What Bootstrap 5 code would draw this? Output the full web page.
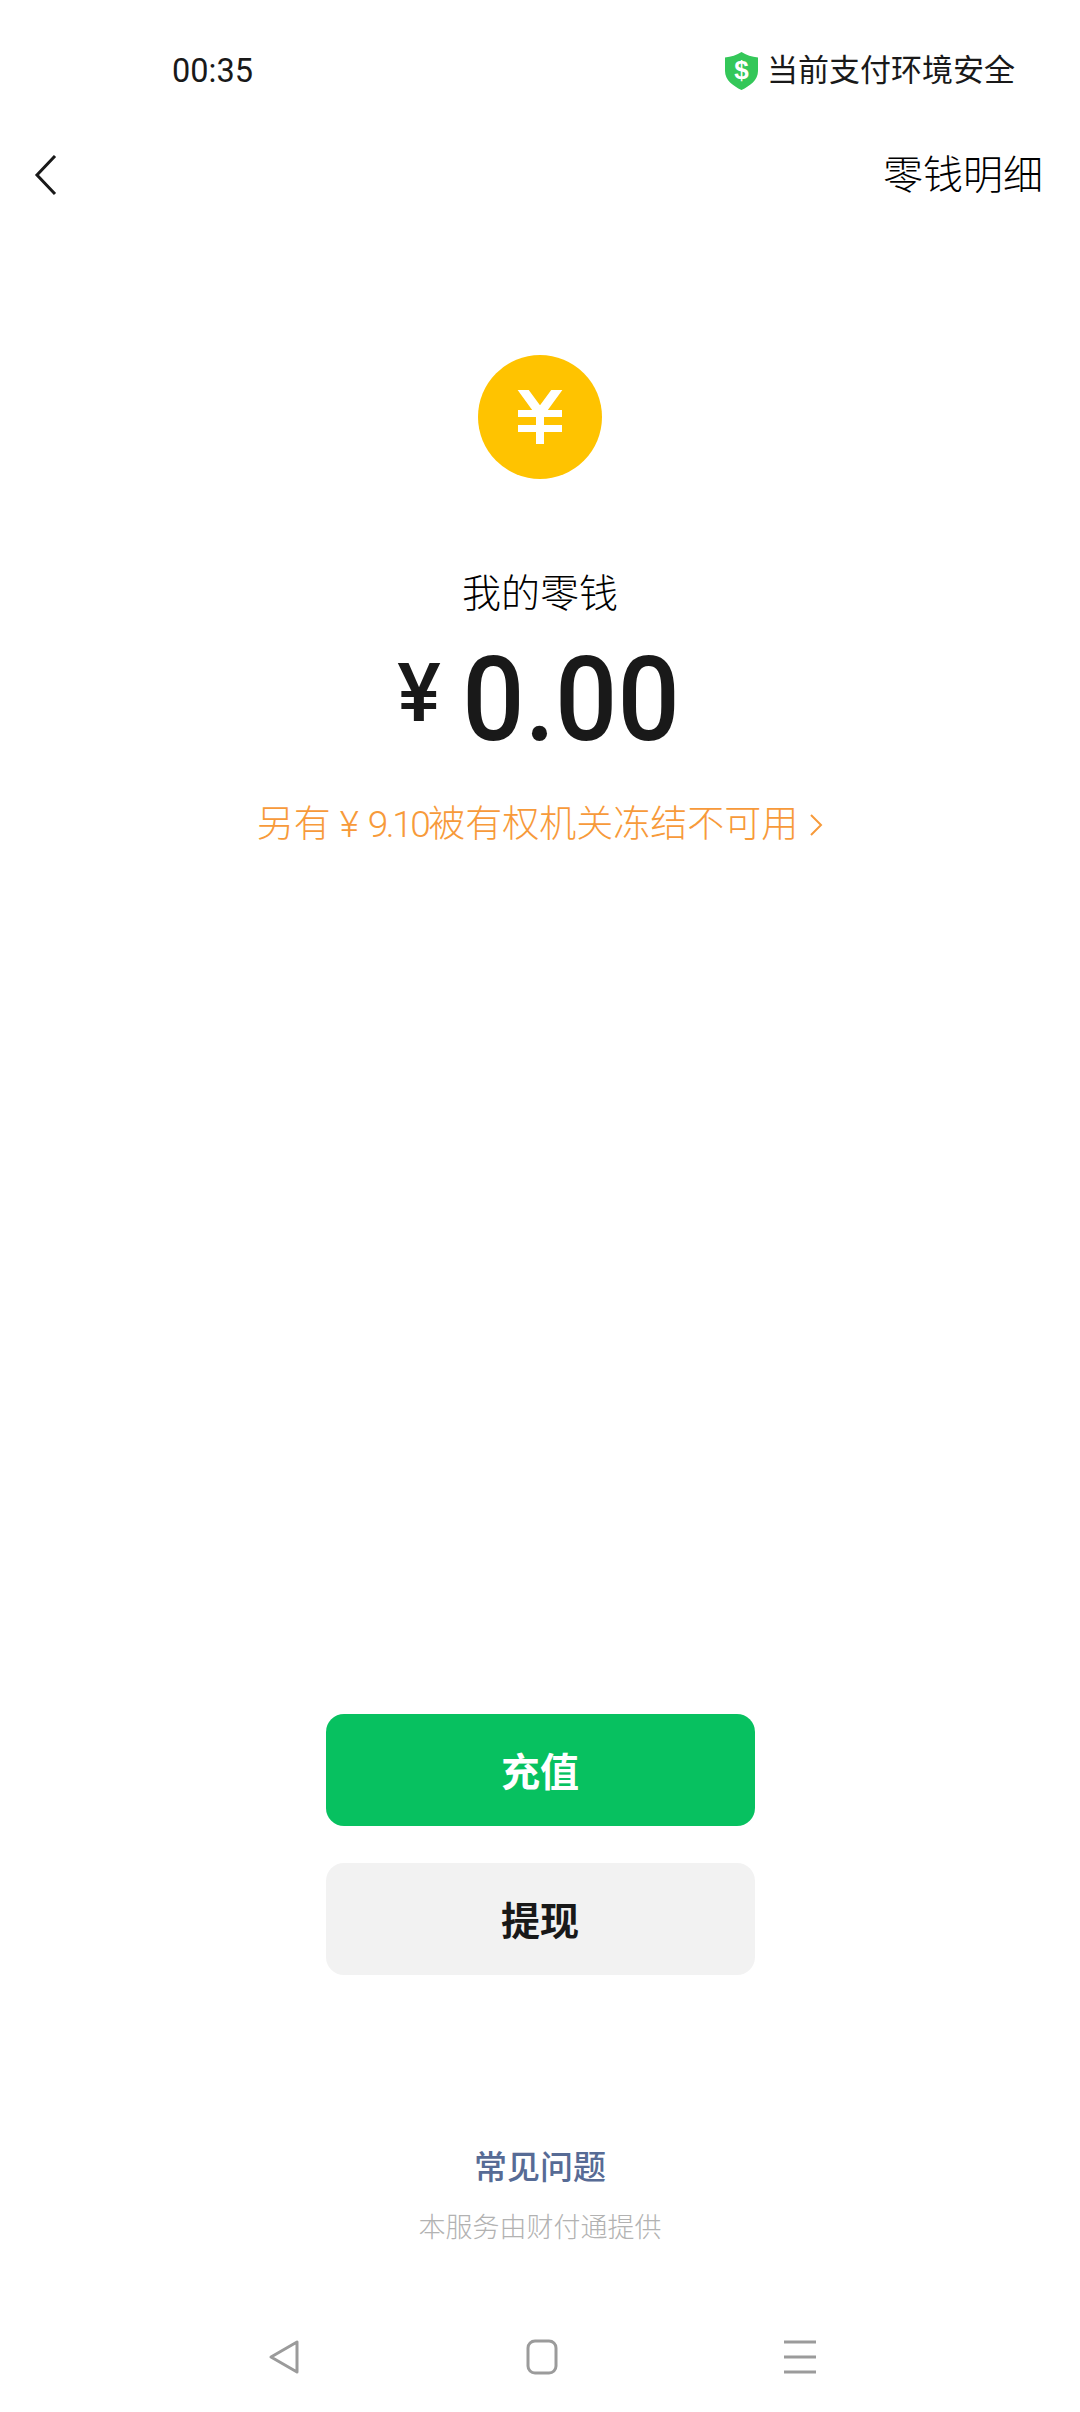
<!DOCTYPE html>
<html lang="zh-CN">

<head>
  <meta charset="UTF-8" />
  <meta name="viewport" content="width=device-width, initial-scale=1.0" />
  <title>我的零钱</title>
  <link href="https://cdn.jsdelivr.net/npm/bootstrap@5.3.2/dist/css/bootstrap.min.css" rel="stylesheet" />
  <style>
    body {
      width: 1080px;
      height: 2412px;
      overflow: hidden;
      background: #fff;
      color: #191919;
      font-family: Roboto, "Noto Sans CJK SC", sans-serif;
    }

    .status-row {
      height: 52px;
      margin-top: 45px;
      padding: 0 65px 0 172px;
      font-size: 32.5px;
      line-height: 52px;
    }

    .status-safe { font-size: 31px; }

    .top-row {
      height: 60px;
      margin-top: 49px;
      padding: 0 37px 0 34px;
    }

    .detail-link { font-size: 40px; line-height: 60px; font-weight: 300; color: #000; }

    .coin {
      width: 124px;
      height: 124px;
      margin-top: 149px;
      background: #ffc300;
      border-radius: 50%;
    }

    .wallet-title { margin-top: 88px; font-size: 39px; line-height: 54px; font-weight: 300; color: #000; }

    .amount { margin-top: 12px; height: 134px; padding-left: 3px; }

    .amount-sign { font-size: 82px; line-height: 134px; font-weight: 500; margin-right: 15px; margin-top: -7px; }

    .amount-num { font-size: 116px; line-height: 134px; font-weight: 500; transform: scaleX(.945); }

    .frozen-link { margin-top: 32px; gap: 11px; font-size: 37px; line-height: 52px; font-weight: 300; color: #f79a3a; text-decoration: none; }

    .frozen-num { letter-spacing: -2.5px; }

    .pay-btn {
      width: 429px;
      height: 112px;
      border: 0;
      border-radius: 18px;
      font-size: 39px;
      font-weight: 700;
      padding: 6px 0 0;
    }

    .pay-green { margin-top: 863px; background: #07c160; color: #fff; }
    .pay-gray { margin-top: 37px; background: #f2f2f2; color: #191919; }

    .faq-link { margin-top: 169px; font-size: 33px; line-height: 48px; font-weight: 500; color: #576b95; text-decoration: none; }
    .provider { margin-top: 16px; font-size: 27px; line-height: 40px; font-weight: 300; color: #b2b2b2; }

    .nav-keys { margin-top: 87px; padding: 0 264px 0 268px; height: 44px; }
  </style>
</head>

<body>
  <div class="d-flex flex-column">
    <!-- status bar -->
    <div class="status-row d-flex justify-content-between align-items-center">
      <span>00:35</span>
      <span class="status-safe d-flex align-items-center gap-2">
        <svg width="35" height="38" viewBox="0 0 35 38">
          <path d="M17.5 0 C22 3 28 5 34 5.5 V19 C34 28 26 34 17.5 38 C9 34 1 28 1 19 V5.5 C7 5 13 3 17.5 0 Z" fill="#34c759" />
          <text x="17.5" y="27" text-anchor="middle" fill="#fff" font-size="26" font-weight="700" font-family="Liberation Sans">$</text>
        </svg>
        当前支付环境安全
      </span>
    </div>

    <!-- title bar -->
    <div class="top-row d-flex justify-content-between align-items-center">
      <svg width="24" height="42" viewBox="0 0 24 42">
        <path d="M21 1 L3 20 L21 39" fill="none" stroke="#191919" stroke-width="3" />
      </svg>
      <a class="detail-link text-decoration-none" href="#">零钱明细</a>
    </div>

    <!-- balance -->
    <div class="d-flex flex-column align-items-center">
      <div class="coin d-flex align-items-center justify-content-center">
        <svg width="46" height="54" viewBox="0 0 46 54">
          <path d="M4 -3 L23 23 L42 -3" fill="none" stroke="#fff" stroke-width="9" />
          <path d="M1 20 H45 V27 H1 Z M1 35 H45 V42 H1 Z M19 22 H27 V54 H19 Z" fill="#fff" />
        </svg>
      </div>
      <div class="wallet-title">我的零钱</div>
      <div class="amount d-flex justify-content-center">
        <span class="amount-sign">¥</span>
        <span class="amount-num">0.00</span>
      </div>
      <a class="frozen-link d-flex align-items-center" href="#">
        <span>另有 ¥ <span class="frozen-num">9.10</span>被有权机关冻结不可用</span>
        <svg width="14" height="24" viewBox="0 0 14 24">
          <path d="M2 2 L12 12 L2 22" fill="none" stroke="#f79a3a" stroke-width="2" />
        </svg>
      </a>

      <button type="button" class="btn pay-btn pay-green">充值</button>
      <button type="button" class="btn pay-btn pay-gray">提现</button>

      <a class="faq-link" href="#">常见问题</a>
      <div class="provider">本服务由财付通提供</div>
    </div>

    <!-- android keys -->
    <div class="nav-keys d-flex justify-content-between align-items-center">
      <svg width="32" height="36" viewBox="0 0 32 36">
        <path d="M29 3 V33 L3 18 Z" fill="none" stroke="#9b9b9b" stroke-width="3" stroke-linejoin="round" />
      </svg>
      <svg width="32" height="36" viewBox="0 0 32 36">
        <rect x="2" y="2" width="28" height="32" rx="7" fill="none" stroke="#9b9b9b" stroke-width="3" />
      </svg>
      <svg width="32" height="34" viewBox="0 0 32 34">
        <path d="M0 2 H32 M0 17 H32 M0 32 H32" stroke="#9b9b9b" stroke-width="3" />
      </svg>
    </div>
  </div>

  <script src="https://cdn.jsdelivr.net/npm/bootstrap@5.3.2/dist/js/bootstrap.bundle.min.js"></script>
</body>

</html>
